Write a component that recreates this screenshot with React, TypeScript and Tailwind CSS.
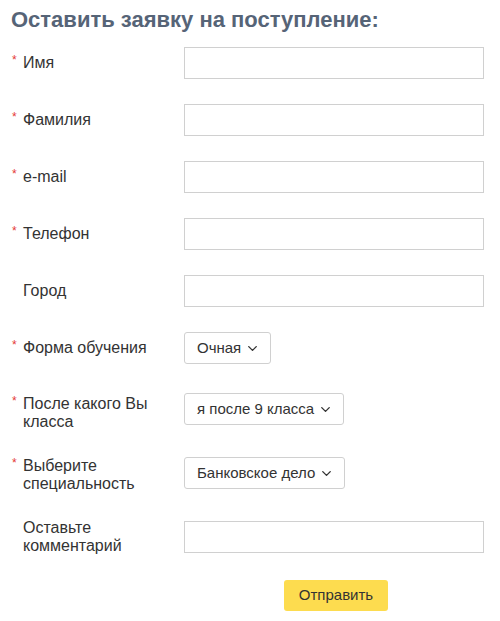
import { ChevronDown } from "lucide-react"

const fields = [
  { label: "Имя", required: true },
  { label: "Фамилия", required: true },
  { label: "e-mail", required: true },
  { label: "Телефон", required: true },
  { label: "Город", required: false },
]

function Label({ text, required, className = "" }: { text: React.ReactNode; required?: boolean; className?: string }) {
  return (
    <div className={"flex w-[173px] shrink-0 " + className}>
      <span className="w-[12px] shrink-0 pl-[1px] text-[12px] leading-[12px] text-[#e53935]">{required ? "*" : ""}</span>
      <span className="text-[16px] leading-[18px] text-[#333]">{text}</span>
    </div>
  )
}

function Select({ value }: { value: string }) {
  return (
    <div className="inline-flex h-[32px] items-center gap-[4px] rounded-[3px] border border-[#d0d0d0] bg-white pl-[12px] pr-[10px] text-[15px] text-[#333]">
      <span>{value}</span>
      <ChevronDown size={15} strokeWidth={2.2} className="text-[#333]" />
    </div>
  )
}

export default function App() {
  return (
    <main className="min-h-screen bg-white pl-[11px] pt-[7px]" style={{ fontFamily: '"Liberation Sans", Arial, sans-serif' }}>
      <h1 className="text-[22px] font-bold leading-[26px] text-[#566477]">Оставить заявку на поступление:</h1>

      <div className="mt-[14px] flex flex-col">
        {fields.map((f, i) => (
          <div key={f.label} className={"flex items-center " + (i > 0 ? "mt-[25px]" : "")}>
            <Label text={f.label} required={f.required} />
            <div className="h-[32px] w-[300px] border border-[#d0d0d0] bg-white" />
          </div>
        ))}

        <div className="mt-[25px] flex items-center">
          <Label text="Форма обучения" required />
          <Select value="Очная" />
        </div>

        <div className="mt-[29px] flex items-start">
          <Label text={<>После какого Вы<br />класса</>} required className="pt-[2px]" />
          <Select value="я после 9 класса" />
        </div>

        <div className="mt-[26px] flex items-start">
          <Label text={<>Выберите<br />специальность</>} required />
          <Select value="Банковское дело" />
        </div>

        <div className="mt-[26px] flex items-center">
          <Label text={<>Оставьте<br />комментарий</>} />
          <div className="h-[32px] w-[300px] border border-[#d0d0d0] bg-white" />
        </div>

        <div className="mt-[25px] flex pl-[273px]">
          <button className="h-[31px] w-[104px] rounded-[3px] bg-[#fddc4f] text-[15px] text-[#333]">Отправить</button>
        </div>
      </div>
    </main>
  )
}
